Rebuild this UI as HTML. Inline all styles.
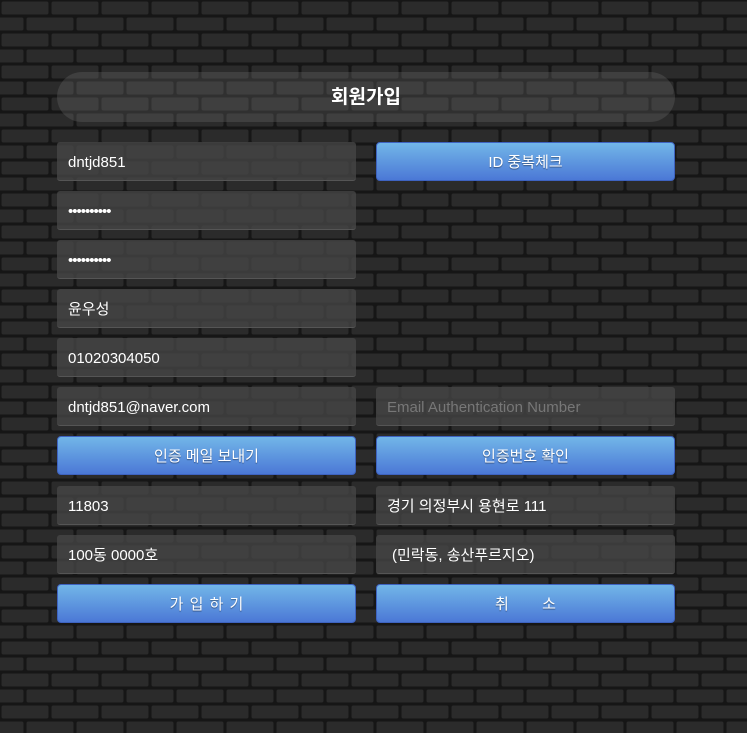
<!DOCTYPE html>
<html><head><meta charset="utf-8"><style>
*{margin:0;padding:0;box-sizing:border-box}
body{width:747px;height:733px;overflow:hidden;font-family:"Liberation Sans","Noto Sans CJK KR",sans-serif;background:#161616;position:relative}
svg.bg{position:absolute;left:0;top:0}
.t{position:absolute;left:57px;top:72px;width:618px;height:50px;border-radius:25px;background:rgba(110,110,110,.3);color:#fff;font-weight:bold;font-size:19px;text-align:center;line-height:52px}
.f{position:absolute;width:299px;height:39px;background:rgba(72,72,72,.75);border-radius:3px;border-bottom:1px solid #555;color:#fff;font-size:15px;line-height:41px;padding-left:11px}
.b{position:absolute;width:299px;height:39px;border-radius:4px;border:1px solid #3e63c0;background:linear-gradient(#72b6e8,#4b78d6);color:#fff;font-size:15px;text-align:center;line-height:39px;text-shadow:0 1px 1px rgba(0,0,0,.4)}
.L{left:57px}.R{left:376px}
</style></head><body>
<svg class="bg" width="747" height="733"><defs><pattern id="p" width="50" height="32" patternUnits="userSpaceOnUse">
<rect width="50" height="32" fill="#161616"/>
<rect x="1.5" y="1.5" width="47" height="13" rx="2" fill="#2b2b2b"/>
<rect x="-23.5" y="17.5" width="47" height="13" rx="2" fill="#2b2b2b"/>
<rect x="26.5" y="17.5" width="47" height="13" rx="2" fill="#2b2b2b"/>
</pattern></defs><rect width="747" height="733" fill="url(#p)"/></svg>
<div class="t">회원가입</div>
<div class="f L" style="top:142px">dntjd851</div>
<div class="b R" style="top:142px">ID 중복체크</div>
<div class="f L" style="top:191px;letter-spacing:-1px">••••••••••</div>
<div class="f L" style="top:240px;letter-spacing:-1px">••••••••••</div>
<div class="f L" style="top:289px">윤우성</div>
<div class="f L" style="top:338px">01020304050</div>
<div class="f L" style="top:387px">dntjd851@naver.com</div>
<div class="f R" style="top:387px;color:#777">Email Authentication Number</div>
<div class="b L" style="top:436px">인증 메일 보내기</div>
<div class="b R" style="top:436px">인증번호 확인</div>
<div class="f L" style="top:486px">11803</div>
<div class="f R" style="top:486px">경기 의정부시 용현로 111</div>
<div class="f L" style="top:535px">100동 0000호</div>
<div class="f R" style="top:535px;padding-left:16px">(민락동, 송산푸르지오)</div>
<div class="b L" style="top:584px;word-spacing:2px">가 입 하 기</div>
<div class="b R" style="top:584px;white-space:pre">취        소</div>
</body></html>
